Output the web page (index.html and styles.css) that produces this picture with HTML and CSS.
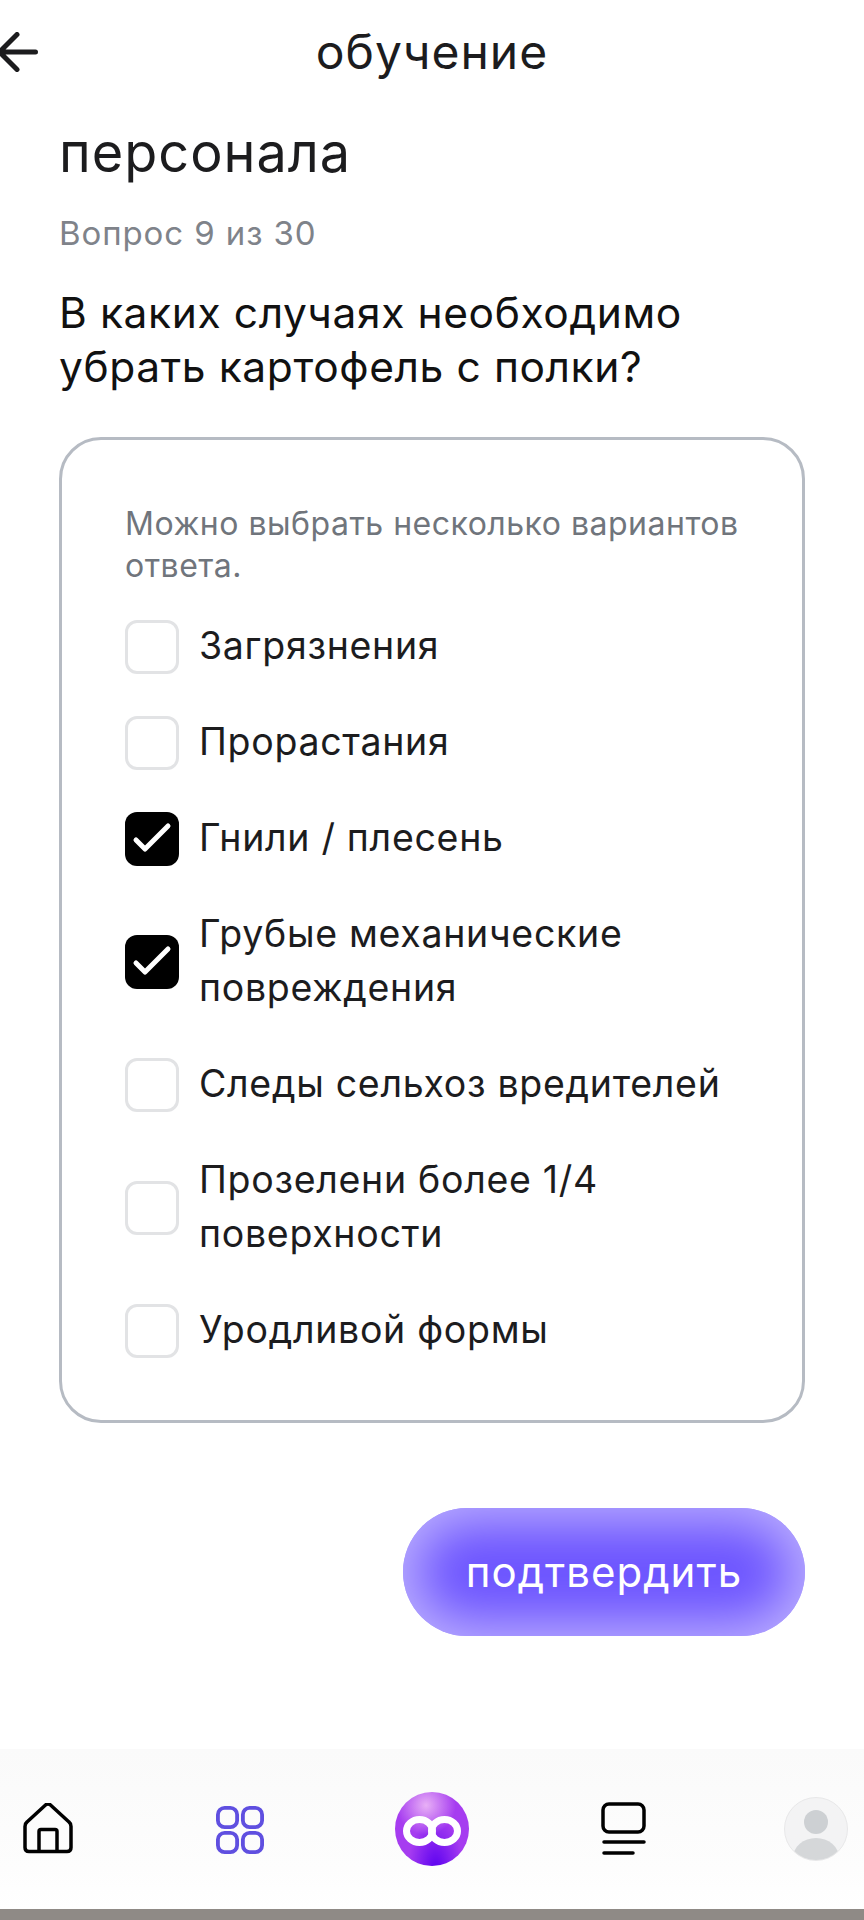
FILE: index.html
```html
<!DOCTYPE html>
<html lang="ru">
<head>
<meta charset="utf-8">
<title>Обучение персонала</title>
<link rel="stylesheet" href="styles.css">
</head>
<body>
<div class="page">
  <header class="topbar">
    <svg class="back" viewBox="0 0 38 40" width="38" height="40"><path d="M35.500 20H2M17 2.500-.5 20 17 37.500" fill="none" stroke="#1c1c1e" stroke-width="5" stroke-linecap="round" stroke-linejoin="round"/></svg>
    <h1 class="title">обучение</h1>
  </header>
  <main class="content">
    <h2 class="course">персонала</h2>
    <p class="progress">Вопрос 9 из 30</p>
    <p class="question">В каких случаях необходимо убрать картофель с полки?</p>
    <section class="card">
      <p class="hint">Можно выбрать несколько вариантов ответа.</p>
      <ul class="options">
        <li class="option"><span class="box"></span><span class="label">Загрязнения</span></li>
        <li class="option"><span class="box"></span><span class="label">Прорастания</span></li>
        <li class="option"><span class="box checked"><svg viewBox="0 0 54 54" width="54" height="54"><path d="M11 28l9 9 23-23" fill="none" stroke="#fff" stroke-width="5" stroke-linecap="round" stroke-linejoin="round"/></svg></span><span class="label">Гнили / плесень</span></li>
        <li class="option"><span class="box checked"><svg viewBox="0 0 54 54" width="54" height="54"><path d="M11 28l9 9 23-23" fill="none" stroke="#fff" stroke-width="5" stroke-linecap="round" stroke-linejoin="round"/></svg></span><span class="label">Грубые механические<br>повреждения</span></li>
        <li class="option"><span class="box"></span><span class="label">Следы сельхоз вредителей</span></li>
        <li class="option"><span class="box"></span><span class="label">Прозелени более 1/4<br>поверхности</span></li>
        <li class="option"><span class="box"></span><span class="label">Уродливой формы</span></li>
      </ul>
    </section>
    <div class="actions"><button class="confirm">подтвердить</button></div>
  </main>
  <nav class="nav">
    <span class="nav-item"><svg viewBox="0 1.500 50 52" width="50" height="52"><path d="M4 20.500 22.500 3.500Q25 1.500 27.500 3.500L46 20.500Q48 22 48 25V46Q48 50 44 50H6Q2 50 2 46V25Q2 22 4 20.500Z" fill="none" stroke="#000" stroke-width="3.500" stroke-linejoin="round"/><path d="M16 50V30Q16 28 18 28H32Q34 28 34 30V50" fill="none" stroke="#000" stroke-width="3.500"/></svg></span>
    <span class="nav-item"><svg class="grid-icon" viewBox="0 0 50 50" width="48" height="48" fill="none" stroke="#5f4fe0" stroke-width="4"><rect x="2" y="2" width="20" height="20" rx="7"/><rect x="28" y="2" width="20" height="20" rx="7"/><rect x="2" y="28" width="20" height="20" rx="7"/><rect x="28" y="28" width="20" height="20" rx="7"/></svg></span>
    <span class="nav-item"><span class="logo"><svg viewBox="0 0 74 74" width="74" height="74" fill="none" stroke="#fff" stroke-width="7"><ellipse cx="24.500" cy="39" rx="13" ry="11.500"/><ellipse cx="49.500" cy="39" rx="13" ry="11.500"/></svg></span></span>
    <span class="nav-item"><svg viewBox="0 0 46 54" width="46" height="54" fill="none" stroke="#000"><rect x="2" y="2" width="41" height="28" rx="6" stroke-width="3.500"/><path d="M3 40H43M3 51H32" stroke-width="3.500" stroke-linecap="round"/></svg></span>
    <span class="nav-item"><span class="avatar"><span class="avatar-head"></span><span class="avatar-body"></span></span></span>
  </nav>
  <div class="strip"></div>
</div>
</body>
</html>
```
FILE: styles.css
```css
* { box-sizing: border-box; }
html, body { margin: 0; padding: 0; }
body { background: #fff; font-family: Inter, "Noto Sans", sans-serif; color: #1c1c1e; }
.page { width: 864px; height: 1920px; display: flex; flex-direction: column; overflow: hidden; }
.topbar { height: 104px; display: flex; align-items: center; justify-content: center; position: relative; }
.back { position: absolute; left: 0; top: 32px; }
.title { margin: 0; font-size: 48px; font-weight: 400; line-height: 54px; letter-spacing: 1px; }
.content { padding: 0 59px; display: flex; flex-direction: column; }
.course { margin: 22px 0 0; font-size: 54px; font-weight: 400; line-height: 54px; letter-spacing: 1px; }
.progress { margin: 33px 0 0; font-size: 33px; line-height: 40px; color: #7f838a; letter-spacing: .9px; }
.question { margin: 33px 0 0; font-size: 42.500px; line-height: 54px; color: #111; letter-spacing: .6px; }
.card { margin-top: 43px; height: 986px; border: 3px solid #b6bbc3; border-radius: 42px; padding: 63px 63px 0; }
.hint { margin: 0; font-size: 32px; line-height: 42px; color: #70757c; letter-spacing: .5px; }
.options { list-style: none; margin: 32px 0 0; padding: 0; display: flex; flex-direction: column; gap: 40px; }
.option { display: flex; align-items: center; gap: 20px; }
.box { flex: none; width: 54px; height: 54px; border: 3px solid #e2e3e5; border-radius: 12px; }
.box.checked { border: 0; background: #000; }
.box svg { display: block; }
.label { font-size: 37.500px; line-height: 54px; padding-bottom: 2px; color: #1c1c1e; letter-spacing: .7px; }
.actions { display: flex; justify-content: flex-end; margin-top: 85px; }
.confirm { width: 402px; height: 128px; border: 0; border-radius: 64px; background: #6c54ff; color: #fff; font: 400 42px/1 Inter, sans-serif; letter-spacing: 1px; box-shadow: inset 0 0 52px 14px rgba(215, 205, 255, .75); }
.nav { margin-top: auto; height: 160px; padding: 0 16px; display: flex; justify-content: space-between; align-items: center; background: linear-gradient(#fafafa, #fdfdfd 75%, #fff); }
.nav-item { width: 64px; display: flex; justify-content: center; align-items: center; }
.grid-icon { margin-top: 2px; }
.logo { flex: none; width: 74px; height: 74px; border-radius: 50%; background: radial-gradient(circle at 42% 18%, #e8b0f6 0, rgba(232, 176, 246, 0) 40%), radial-gradient(ellipse at 55% 105%, #5a00f0 0, rgba(90, 0, 240, 0) 48%), #a63cf0; }
.logo svg { display: block; }
.avatar { flex: none; width: 64px; height: 64px; border-radius: 50%; background: #f3f3f4; border: 1px solid #e8e8e9; position: relative; overflow: hidden; }
.avatar-head { position: absolute; left: 19px; top: 12px; width: 24px; height: 24px; border-radius: 50%; background: #cdd0d3; }
.avatar-body { position: absolute; left: 8px; top: 40px; width: 46px; height: 40px; border-radius: 50%; background: #d5d7d9; }
.strip { height: 11px; flex: none; background: #8f8a86; }
```
